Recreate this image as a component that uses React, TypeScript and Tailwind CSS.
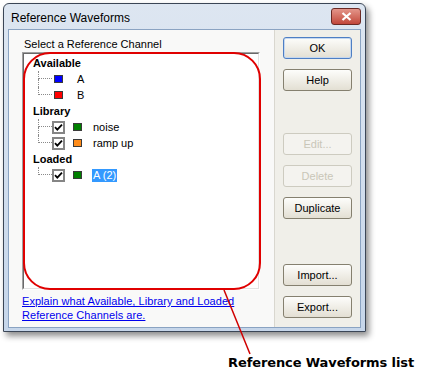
import React from "react";

const font = { fontFamily: '"Liberation Sans", Arial, sans-serif' };

function Connector({ last }: { last: boolean }) {
  return (
    <div className="w-[14px] h-full flex flex-col shrink-0">
      <div className="h-[8px] border-l border-b border-dotted border-[#8a8a8a]" />
      <div className={last ? "flex-1" : "flex-1 border-l border-dotted border-[#8a8a8a]"} />
    </div>
  );
}

function Swatch({ color }: { color: string }) {
  return <div className={`w-[9px] h-[8px] border border-[#3a3a3a] ${color}`} />;
}

function Check() {
  return (
    <div className="w-[13px] h-[13px] border-2 border-[#858585] bg-white flex items-center justify-center">
      <svg width="9" height="9" viewBox="0 0 9 9">
        <path d="M1 4.2 L3.3 6.6 L8 1.6" fill="none" stroke="#000" strokeWidth="1.8" />
      </svg>
    </div>
  );
}

type Item = { label: string; swatch: string; check?: boolean; selected?: boolean };

function Group({ title, items }: { title: string; items: Item[] }) {
  return (
    <div className="flex flex-col">
      <div className="h-[16px] flex items-center pl-[9px] font-bold text-[11px] text-black">{title}</div>
      {items.map((it, i) => (
        <div key={it.label} className="h-[16px] flex items-stretch pl-[14px]">
          <Connector last={i === items.length - 1} />
          <div className="flex items-center">
            {it.check ? (
              <>
                <div><Check /></div>
                <div className="ml-[8px]"><Swatch color={it.swatch} /></div>
                <div
                  className={
                    it.selected
                      ? "ml-[10px] px-[1px] h-[13px] leading-[13px] bg-[#3399ff] text-white text-[11px]"
                      : "ml-[11px] text-[11px] text-black"
                  }
                >
                  {it.label}
                </div>
              </>
            ) : (
              <>
                <div className="ml-[2px]"><Swatch color={it.swatch} /></div>
                <div className="ml-[14px] text-[11px] text-black">{it.label}</div>
              </>
            )}
          </div>
        </div>
      ))}
    </div>
  );
}

function Btn({ label, disabled, primary, mt }: { label: string; disabled?: boolean; primary?: boolean; mt: string }) {
  let cls =
    "w-[69px] h-[22px] rounded-[3px] border flex items-center justify-center text-[11px] " + mt + " ";
  if (disabled) cls += "border-[#cdcbc0] bg-[#f4f3ef] text-[#c9c6b8]";
  else if (primary)
    cls +=
      "border-[#4e7fc4] bg-gradient-to-b from-[#fdfdfb] to-[#e3dfd3] text-black shadow-[inset_0_0_0_1px_#c6d8ef]";
  else cls += "border-[#85806f] bg-gradient-to-b from-[#fdfdfb] to-[#e3dfd3] text-black";
  return <div className={cls}>{label}</div>;
}

export default function App() {
  return (
    <div className="w-[443px] h-[373px] bg-white relative overflow-hidden" style={font}>
      <div className="ml-[3px] mt-[3px] w-[363px] h-[329px] rounded-t-[6px] border border-[#3b4656] bg-gradient-to-b from-[#dde6f1] to-[#c6d6ea] shadow-[3px_4px_6px_rgba(0,0,0,0.45)] flex flex-col">
        <div className="h-[25px] flex items-start shrink-0">
          <div className="pl-[7px] pt-[7px] text-[12px] leading-[14px] text-black">Reference Waveforms</div>
          <div className="ml-auto mr-[4px] mt-[4px] w-[30px] h-[17px] rounded-[3px] border border-[#6b2a24] bg-gradient-to-b from-[#e3958a] to-[#c1463a] flex items-center justify-center">
            <svg width="11" height="9" viewBox="0 0 11 9">
              <path d="M1.5 1 L9.5 8 M9.5 1 L1.5 8" stroke="#fff" strokeWidth="2.2" />
            </svg>
          </div>
        </div>
        <div className="mx-[4px] mb-[3px] flex-1 border border-[#8aa3c2] flex bg-[#f0efe9]">
          <div className="w-[266px] bg-[#f9f9f8] border-r border-[#d9d7cf] flex flex-col pl-[13px] pt-[8px]">
            <div className="text-[11px] leading-[13px] pl-[2px] text-black">Select a Reference Channel</div>
            <div className="mt-[1px] w-[238px] h-[238px] border-t border-l border-[#a0a0a0] border-b border-r border-b-white border-r-white">
              <div className="w-full h-full border-t border-l border-[#696969] border-b border-r border-b-[#e3e3e3] border-r-[#e3e3e3] bg-white pt-[1px]">
                <Group
                  title="Available"
                  items={[
                    { label: "A", swatch: "bg-[#0000ff]" },
                    { label: "B", swatch: "bg-[#ff0000]" },
                  ]}
                />
                <Group
                  title="Library"
                  items={[
                    { label: "noise", swatch: "bg-[#008000]", check: true },
                    { label: "ramp up", swatch: "bg-[#ff8c1a]", check: true },
                  ]}
                />
                <Group
                  title="Loaded"
                  items={[{ label: "A (2)", swatch: "bg-[#008000]", check: true, selected: true }]}
                />
              </div>
            </div>
            <div className="mt-[4px] text-[11px] leading-[14px] text-[#0000ee] underline tracking-[0.05px]">
              Explain what Available, Library and Loaded
              <br />
              Reference Channels are.
            </div>
          </div>
          <div className="flex-1 flex flex-col pl-[8px] pt-[7px]">
            <Btn label="OK" primary mt="mt-0" />
            <Btn label="Help" mt="mt-[10px]" />
            <Btn label="Edit..." disabled mt="mt-[42px]" />
            <Btn label="Delete" disabled mt="mt-[10px]" />
            <Btn label="Duplicate" mt="mt-[10px]" />
            <Btn label="Import..." mt="mt-[45px]" />
            <Btn label="Export..." mt="mt-[10px]" />
          </div>
        </div>
      </div>
      <div
        className="pl-[228px] mt-[23px] text-[13px] leading-[16px] font-bold text-black tracking-[-0.1px]"
        style={{ fontFamily: '"DejaVu Sans", Verdana, sans-serif' }}
      >
        Reference Waveforms list
      </div>
      <svg className="absolute inset-0 pointer-events-none" width="443" height="373">
        <rect x="24" y="53" width="236" height="236" rx="26" fill="none" stroke="#e00000" strokeWidth="2" />
        <line x1="224" y1="290" x2="250" y2="354" stroke="#d00000" strokeWidth="1.5" />
      </svg>
    </div>
  );
}
